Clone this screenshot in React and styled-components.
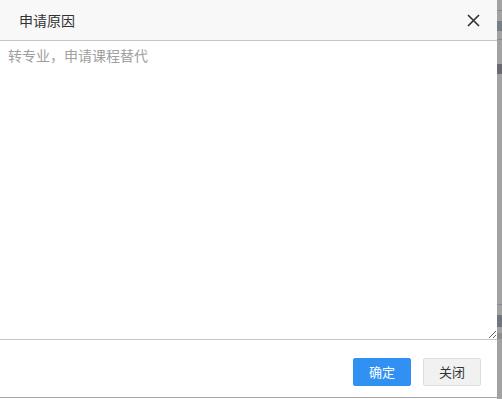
import React from 'react';
import styled, { createGlobalStyle } from 'styled-components';

const GlobalStyle = createGlobalStyle`
  html, body {
    margin: 0;
    padding: 0;
    background: #ffffff;
  }
  body {
    font-family: "Noto Sans CJK SC", "Noto Sans", sans-serif;
  }
`;

const Page = styled.div`
  display: flex;
  width: 502px;
  height: 399px;
  overflow: hidden;
`;

const Dialog = styled.div`
  width: 497px;
  height: 398px;
  display: flex;
  flex-direction: column;
  background: #fff;
  border-bottom: 1px solid #a8a8a8;
  box-sizing: border-box;
`;

const Header = styled.div`
  height: 40px;
  flex: none;
  display: flex;
  align-items: center;
  justify-content: space-between;
  padding: 0 16px 0 19px;
  background: #f8f8f8;
  color: #333;
  font-size: 14px;
`;

const CloseButton = styled.button`
  width: 16px;
  height: 16px;
  padding: 0;
  border: 0;
  background: none;
  display: flex;
  align-items: center;
  justify-content: center;
  cursor: pointer;
`;

const Reason = styled.textarea`
  flex: none;
  height: 300px;
  width: 100%;
  box-sizing: border-box;
  margin: 0;
  padding: 4px 8px;
  border: 0;
  border-top: 1px solid #c6c6c6;
  border-bottom: 1px solid #c6c6c6;
  font-family: inherit;
  font-size: 14px;
  line-height: 20px;
  color: #333;
  outline: none;
  resize: both;
  &::placeholder {
    color: #a0a0a0;
  }
`;

const Footer = styled.div`
  flex: 1;
  display: flex;
  justify-content: flex-end;
  align-items: flex-start;
  gap: 12px;
  padding: 18px 16px 0 0;
`;

const Button = styled.button`
  height: 28px;
  padding: 0 15px;
  border: 1px solid ${({ primary }) => (primary ? '#3091f2' : '#dedede')};
  background: ${({ primary }) => (primary ? '#3091f2' : '#f1f1f1')};
  color: ${({ primary }) => (primary ? '#fff' : '#333')};
  border-radius: 2px;
  font-family: inherit;
  font-size: 13px;
  line-height: 26px;
  cursor: pointer;
`;

const Backdrop = styled.div`
  flex: 1;
  background: #a2a2a2;
  display: flex;
  flex-direction: column;
`;

const BackdropBit = styled.div`
  height: ${({ h }) => h}px;
  margin-top: ${({ top }) => top}px;
  background: ${({ color }) => color};
`;

export default function App() {
  return (
    <>
      <GlobalStyle />
      <Page>
        <Dialog>
          <Header>
            <span>申请原因</span>
            <CloseButton aria-label="关闭">
              <svg width="13" height="13" viewBox="0 0 13 13">
                <path d="M1 1 L12 12 M12 1 L1 12" stroke="#2f2f2f" strokeWidth="1.6" />
              </svg>
            </CloseButton>
          </Header>
          <Reason placeholder="转专业，申请课程替代" />
          <Footer>
            <Button primary>确定</Button>
            <Button>关闭</Button>
          </Footer>
        </Dialog>
        <Backdrop>
          <BackdropBit top={10} h={1} color="#8a8a8a" />
          <BackdropBit top={10} h={10} color="#7a7f86" />
          <BackdropBit top={8} h={1} color="#8a8a8a" />
          <BackdropBit top={24} h={10} color="#6c6a70" />
          <BackdropBit top={230} h={1} color="#8a8a8a" />
          <BackdropBit top={10} h={12} color="#70757e" />
          <BackdropBit top={6} h={6} color="#8e8e8e" />
        </Backdrop>
      </Page>
    </>
  );
}
